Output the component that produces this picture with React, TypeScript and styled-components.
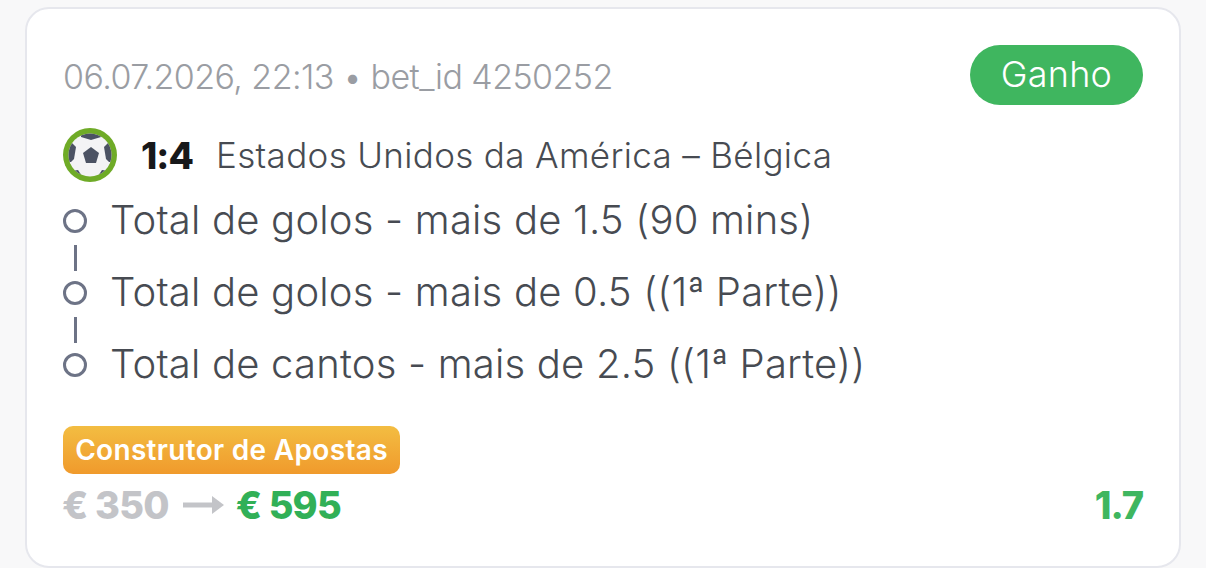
import React from "react";
import styled, { createGlobalStyle } from "styled-components";

const Global = createGlobalStyle`
  html, body { margin: 0; padding: 0; background: #f8f8f9; }
  body { font-family: "Inter", "Liberation Sans", sans-serif; }
  #root { width: 1206px; height: 568px; overflow: hidden; }
`;

const Page = styled.div`
  width: 1206px;
  height: 568px;
  padding: 7px 25px 0;
  box-sizing: border-box;
  overflow: hidden;
`;

const Card = styled.section`
  box-sizing: border-box;
  width: 1156px;
  height: 561px;
  background: #fff;
  border: 2px solid #e6e7ed;
  border-radius: 24px;
  padding: 36px 36px 0;
  display: flex;
  flex-direction: column;
`;

const Header = styled.header`
  display: flex;
  justify-content: space-between;
  align-items: center;
  height: 60px;
`;

const Meta = styled.div`
  font-size: 34px;
  font-weight: 300;
  color: #9a9da3;
  letter-spacing: -0.55px;
  margin-top: 2px;
  white-space: nowrap;
`;

const StatusPill = styled.div`
  width: 173px;
  height: 60px;
  border-radius: 30px;
  background: #3fb65f;
  color: #fff;
  font-size: 36px;
  font-weight: 300;
  letter-spacing: 0.2px;
  display: flex;
  align-items: center;
  justify-content: center;
  padding-bottom: 2px;
  box-sizing: border-box;
`;

const MatchRow = styled.div`
  display: flex;
  align-items: center;
  height: 54px;
  margin-top: 23px;
`;

const Ball = styled.svg`
  width: 54px;
  height: 54px;
  flex: none;
`;

const Score = styled.span`
  margin-left: 24px;
  font-size: 37px;
  font-weight: 800;
  color: #17181a;
  width: 75px;
  letter-spacing: -1px;
`;

const Teams = styled.span`
  font-size: 35px;
  font-weight: 300;
  color: #474b52;
  white-space: nowrap;
  letter-spacing: 0.34px;
`;

const Legs = styled.div`
  display: flex;
  flex-direction: column;
  margin-top: 3px;
`;

const Leg = styled.div`
  display: flex;
  align-items: center;
  height: 72px;
  position: relative;
`;

const Dot = styled.span`
  box-sizing: border-box;
  width: 24px;
  height: 24px;
  border: 3.5px solid #6d7386;
  border-radius: 50%;
  flex: none;
`;

const Connector = styled.span`
  position: absolute;
  left: 10.5px;
  top: -12px;
  width: 3px;
  height: 26px;
  background: #6d7386;
`;

const LegText = styled.span`
  margin-left: 23px;
  margin-top: -3px;
  font-size: 40px;
  font-weight: 300;
  color: #474b52;
  white-space: nowrap;
  letter-spacing: 0.2px;
`;

const Badge = styled.div`
  align-self: flex-start;
  box-sizing: border-box;
  width: 337px;
  height: 48px;
  margin-top: 25px;
  border-radius: 10px;
  background: linear-gradient(180deg, #f3bd42 0%, #f09a2c 100%);
  color: #fff;
  font-size: 28px;
  font-weight: 600;
  letter-spacing: 0.32px;
  display: flex;
  align-items: center;
  justify-content: center;
  white-space: nowrap;
`;

const Footer = styled.div`
  display: flex;
  justify-content: space-between;
  align-items: center;
  height: 62px;
`;

const Amounts = styled.div`
  display: flex;
  align-items: center;
  font-size: 38px;
  font-weight: 800;
  letter-spacing: -0.8px;
  margin-left: -1px;
`;

const Stake = styled.span`
  color: #c3c4c8;
`;

const Arrow = styled.svg`
  width: 42px;
  height: 24px;
  margin: 0 11px 0 14px;
`;

const Win = styled.span`
  color: #31b057;
`;

const Odds = styled.span`
  font-size: 38px;
  font-weight: 800;
  letter-spacing: -1px;
  color: #3fb65f;
`;

const legs = [
  "Total de golos - mais de 1.5 (90 mins)",
  "Total de golos - mais de 0.5 ((1ª Parte))",
  "Total de cantos - mais de 2.5 ((1ª Parte))",
];

export default function App() {
  return (
    <Page>
      <Global />
      <Card>
        <Header>
          <Meta>06.07.2026, 22:13 • bet_id 4250252</Meta>
          <StatusPill>Ganho</StatusPill>
        </Header>
        <MatchRow>
          <Ball viewBox="0 0 54 54">
            <defs>
              <clipPath id="ball-clip">
                <circle cx="27" cy="27" r="21.5" />
              </clipPath>
            </defs>
            <circle cx="27" cy="27" r="27" fill="#6fab27" />
            <circle cx="27" cy="27" r="21.5" fill="#f3f3f5" />
            <g clipPath="url(#ball-clip)" fill="#4b5263">
              <path d="M28 19l8 6-3 10H23l-3-10z" />
              <path d="M18 3h20v6l-10 3-10-3z" />
              <path d="M3 14h5l5 5-2 12-3 3H3z" />
              <path d="M51 14h-5l-5 5 2 12 3 3h5z" />
              <path d="M8 43l7-1 4 6v4H8z" />
              <path d="M46 43l-7-1-4 6v4h11z" />
            </g>
          </Ball>
          <Score>1:4</Score>
          <Teams>Estados Unidos da América – Bélgica</Teams>
        </MatchRow>
        <Legs>
          {legs.map((leg, i) => (
            <Leg key={leg}>
              {i > 0 && <Connector />}
              <Dot />
              <LegText>{leg}</LegText>
            </Leg>
          ))}
        </Legs>
        <Badge>Construtor de Apostas</Badge>
        <Footer>
          <Amounts>
            <Stake>€ 350</Stake>
            <Arrow viewBox="0 0 42 24">
              <path d="M0 12h30" stroke="#c3c4c8" strokeWidth="5" />
              <path d="M29 3l12 9-12 9z" fill="#c3c4c8" />
            </Arrow>
            <Win>€ 595</Win>
          </Amounts>
          <Odds>1.7</Odds>
        </Footer>
      </Card>
    </Page>
  );
}
